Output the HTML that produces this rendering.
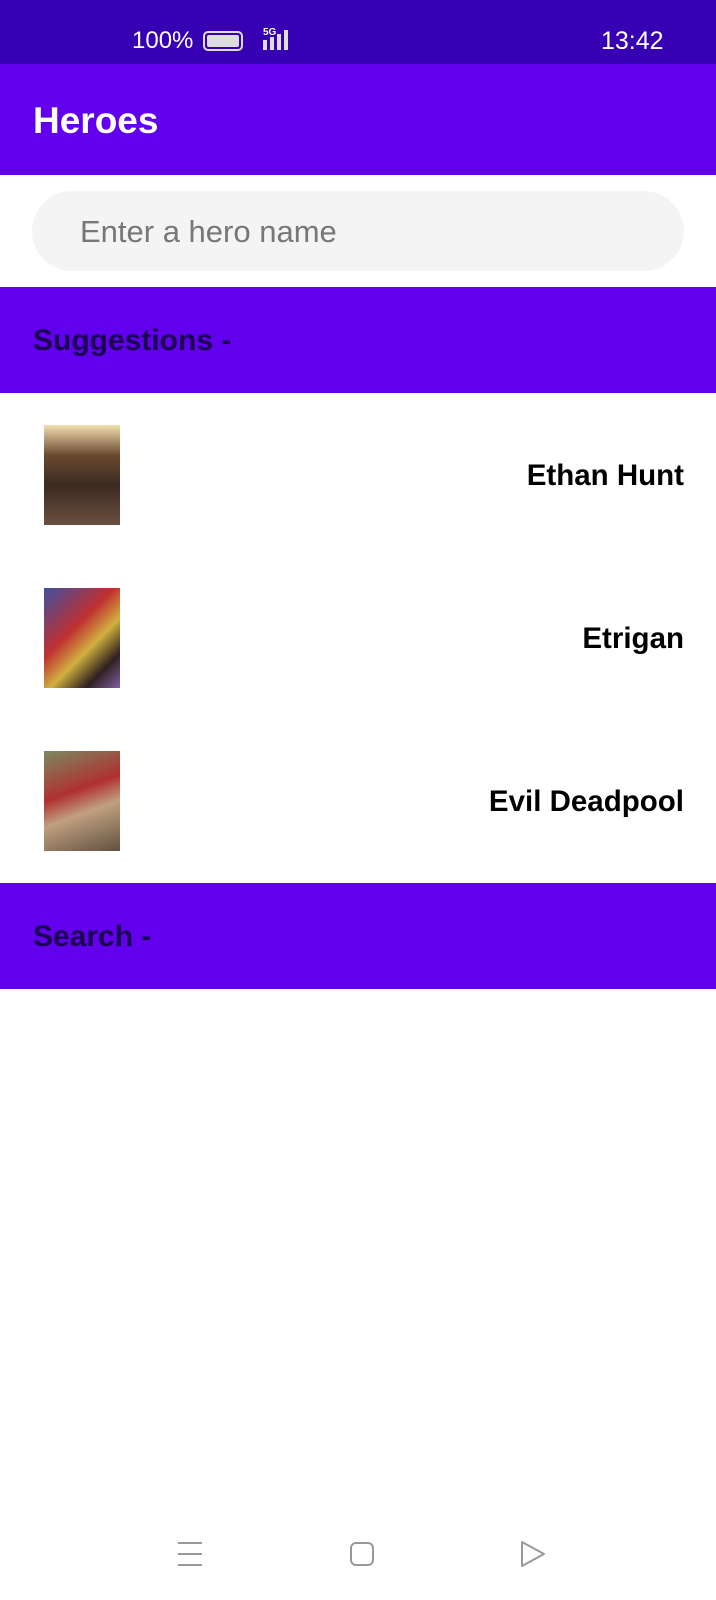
<!DOCTYPE html>
<html><head><style>
*{margin:0;padding:0;box-sizing:border-box}
body{width:716px;height:1600px;background:#fff;font-family:"Liberation Sans",sans-serif;position:relative;overflow:hidden}
.abs{position:absolute}
.status{left:0;top:0;width:716px;height:64px;background:#3700b3;color:#fff}
.app{left:0;top:64px;width:716px;height:111px;background:#6200ee}
.bar{left:0;width:716px;height:106px;background:#6200ee}
.bar span{position:absolute;left:33px;top:37px;font-size:30px;font-weight:bold;color:#1a0050}
.name{right:32px;font-size:29.5px;font-weight:bold;color:#000;text-align:right}
.img{left:44px;width:76px;height:100px}
</style></head><body>
<div class="abs status">
 <div class="abs" style="left:132px;top:27px;font-size:24px">100%</div>
 <div class="abs" style="left:203px;top:31px;width:40px;height:20px;border:2px solid #ddd;border-radius:5px;padding:2px"><div style="width:100%;height:100%;background:#ddd;border-radius:2px"></div></div>
 <div class="abs" style="left:263px;top:27px;font-size:10px;font-weight:bold">5G</div>
 <div class="abs" style="left:263px;top:40px;width:4px;height:10px;background:#ddd"></div>
 <div class="abs" style="left:270px;top:37px;width:4px;height:13px;background:#ddd"></div>
 <div class="abs" style="left:277px;top:34px;width:4px;height:16px;background:#ddd"></div>
 <div class="abs" style="left:284px;top:30px;width:4px;height:20px;background:#ddd"></div>
 <div class="abs" style="left:601px;top:27px;font-size:25px">13:42</div>
</div>
<div class="abs app"><div class="abs" style="left:33px;top:36px;font-size:37px;font-weight:bold;color:#fff">Heroes</div></div>
<div class="abs" style="left:32px;top:191px;width:652px;height:80px;border-radius:40px;background:#f4f4f4"><div class="abs" style="left:48px;top:23px;font-size:31px;color:#777">Enter a hero name</div></div>
<div class="abs bar" style="top:287px"><span>Suggestions -</span></div>
<div class="abs img" style="top:425px;background:linear-gradient(#f2e0b0,#6b4a30 30%,#3a2a20 60%,#6a5040)"></div>
<div class="abs name" style="top:459px">Ethan Hunt</div>
<div class="abs img" style="top:588px;background:linear-gradient(135deg,#4050a0,#c03030 40%,#d0b040 60%,#302020 80%,#8060a0)"></div>
<div class="abs name" style="top:622px">Etrigan</div>
<div class="abs img" style="top:751px;background:linear-gradient(160deg,#7a8a60,#b03030 40%,#c0a080 60%,#605040)"></div>
<div class="abs name" style="top:785px">Evil Deadpool</div>
<div class="abs bar" style="top:883px"><span>Search -</span></div>
<svg class="abs" style="left:170px;top:1530px" width="390" height="50">
 <g stroke="#999" stroke-width="2" fill="none">
  <path d="M8 13h24M8 24h24M8 35h24"/>
  <rect x="181" y="13" width="22" height="22" rx="5"/>
  <path d="M352 12v24l22-12z" stroke-linejoin="round"/>
 </g>
</svg>
</body></html>
